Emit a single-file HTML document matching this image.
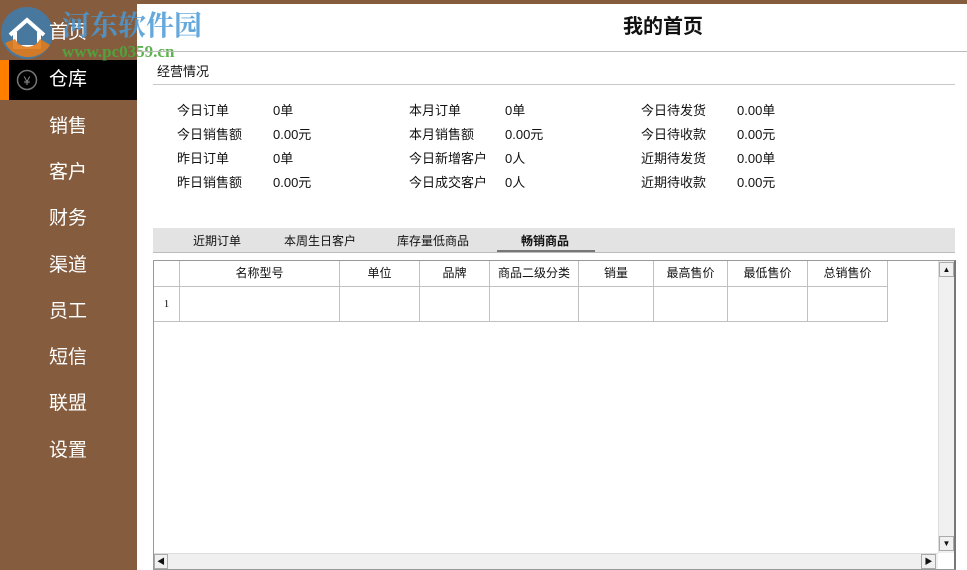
<!DOCTYPE html>
<html><head><meta charset="utf-8"><style>
*{margin:0;padding:0;box-sizing:border-box}
body{width:967px;height:570px;overflow:hidden;background:#fff;font-family:"Liberation Sans","Noto Sans CJK SC",sans-serif;position:relative;font-size:13px;color:#111}
.side{position:absolute;left:0;top:0;width:137px;height:570px;background:#855c3e}
.top{position:absolute;left:137px;top:0;width:830px;height:4px;background:#855c3e}
.it{position:absolute;left:49px;color:#fff;font-size:19px;line-height:22px}
.sel{position:absolute;left:0;top:60px;width:137px;height:40px;background:#000}
.sel i{position:absolute;left:0;top:0;width:9px;height:40px;background:#ff8000}
.a{position:absolute;font-size:13px;line-height:16px;white-space:nowrap}
.hl{position:absolute;height:1px;background:#c8c8c8}
.grid{position:absolute;left:153px;top:260px;width:803px;height:310px;border:1px solid #999;border-right:2px solid #777}
.c{position:absolute;border-right:1px solid #c0c0c0;border-bottom:1px solid #c0c0c0;text-align:center;font-size:12px;line-height:25px}
</style></head><body>
<div class="side"></div><div class="top"></div>
<div class="sel"><i></i></div>
<svg style="position:absolute;left:0;top:5px" width="60" height="60"><circle cx="27" cy="28" r="26" fill="#3a7fb8" opacity=".8"/><path d="M10 30 L27 15 L44 30 M15 27 V42 H39 V27" stroke="#fff" stroke-width="4" fill="none"/><path d="M5 38 A26 26 0 0 0 50 40 L40 34 A14 14 0 0 1 15 34Z" fill="#e07a1a" opacity=".9"/></svg>
<svg style="position:absolute;left:16px;top:69px" width="22" height="22"><circle cx="11" cy="11" r="9.5" stroke="#777" stroke-width="1.5" fill="none"/><text x="11" y="16" font-size="12" fill="#888" text-anchor="middle" font-family="Liberation Sans">¥</text></svg>
<div class="it" style="top:22px">首页</div>
<div class="it" style="top:69px">仓库</div>
<div class="it" style="top:116px">销售</div>
<div class="it" style="top:162px">客户</div>
<div class="it" style="top:208px">财务</div>
<div class="it" style="top:255px">渠道</div>
<div class="it" style="top:301px">员工</div>
<div class="it" style="top:347px">短信</div>
<div class="it" style="top:393px">联盟</div>
<div class="it" style="top:440px">设置</div>
<div class="a" style="left:62px;top:8px;font-size:28px;line-height:32px;font-weight:bold;color:#4a9ad6;font-family:'Noto Serif CJK SC',serif;opacity:.85">河东软件园</div>
<div class="a" style="left:62px;top:44px;font-size:17px;font-weight:bold;color:#4caa3c;font-family:'Liberation Serif',serif;opacity:.9">www.pc0359.cn</div>
<div class="a" style="left:623px;top:15px;font-size:20px;line-height:24px;font-weight:bold">我的首页</div>
<div class="hl" style="left:137px;top:51px;width:830px;background:#bbb"></div>
<div class="a" style="left:157px;top:64px">经营情况</div>
<div class="hl" style="left:153px;top:84px;width:802px"></div>
<div class="a" style="left:177px;top:103px">今日订单</div><div class="a" style="left:273px;top:103px">0单</div>
<div class="a" style="left:177px;top:127px">今日销售额</div><div class="a" style="left:273px;top:127px">0.00元</div>
<div class="a" style="left:177px;top:151px">昨日订单</div><div class="a" style="left:273px;top:151px">0单</div>
<div class="a" style="left:177px;top:175px">昨日销售额</div><div class="a" style="left:273px;top:175px">0.00元</div>
<div class="a" style="left:409px;top:103px">本月订单</div><div class="a" style="left:505px;top:103px">0单</div>
<div class="a" style="left:409px;top:127px">本月销售额</div><div class="a" style="left:505px;top:127px">0.00元</div>
<div class="a" style="left:409px;top:151px">今日新增客户</div><div class="a" style="left:505px;top:151px">0人</div>
<div class="a" style="left:409px;top:175px">今日成交客户</div><div class="a" style="left:505px;top:175px">0人</div>
<div class="a" style="left:641px;top:103px">今日待发货</div><div class="a" style="left:737px;top:103px">0.00单</div>
<div class="a" style="left:641px;top:127px">今日待收款</div><div class="a" style="left:737px;top:127px">0.00元</div>
<div class="a" style="left:641px;top:151px">近期待发货</div><div class="a" style="left:737px;top:151px">0.00单</div>
<div class="a" style="left:641px;top:175px">近期待收款</div><div class="a" style="left:737px;top:175px">0.00元</div>
<div style="position:absolute;left:153px;top:228px;width:802px;height:25px;background:#e3e3e3;border-bottom:1px solid #bbb"></div>
<div class="a" style="left:193px;top:233px;font-size:12px">近期订单</div>
<div class="a" style="left:284px;top:233px;font-size:12px">本周生日客户</div>
<div class="a" style="left:397px;top:233px;font-size:12px">库存量低商品</div>
<div class="a" style="left:521px;top:233px;font-size:12px;font-weight:bold">畅销商品</div>
<div style="position:absolute;left:497px;top:250px;width:98px;height:2px;background:#777"></div>
<div class="grid">
<div class="c" style="left:0;top:0;width:26px;height:26px"></div>
<div class="c" style="left:26px;top:0;width:160px;height:26px">名称型号</div>
<div class="c" style="left:186px;top:0;width:80px;height:26px">单位</div>
<div class="c" style="left:266px;top:0;width:70px;height:26px">品牌</div>
<div class="c" style="left:336px;top:0;width:89px;height:26px">商品二级分类</div>
<div class="c" style="left:425px;top:0;width:75px;height:26px">销量</div>
<div class="c" style="left:500px;top:0;width:74px;height:26px">最高售价</div>
<div class="c" style="left:574px;top:0;width:80px;height:26px">最低售价</div>
<div class="c" style="left:654px;top:0;width:80px;height:26px">总销售价</div>
<div class="c" style="left:0;top:26px;width:26px;height:35px;line-height:34px;font-family:'Liberation Serif',serif;font-size:11px">1</div>
<div class="c" style="left:26px;top:26px;width:160px;height:35px"></div>
<div class="c" style="left:186px;top:26px;width:80px;height:35px"></div>
<div class="c" style="left:266px;top:26px;width:70px;height:35px"></div>
<div class="c" style="left:336px;top:26px;width:89px;height:35px"></div>
<div class="c" style="left:425px;top:26px;width:75px;height:35px"></div>
<div class="c" style="left:500px;top:26px;width:74px;height:35px"></div>
<div class="c" style="left:574px;top:26px;width:80px;height:35px"></div>
<div class="c" style="left:654px;top:26px;width:80px;height:35px"></div>
<div style="position:absolute;left:784px;top:0;width:16px;height:292px;background:#f0f0f0;border-left:1px solid #ddd"></div>
<div style="position:absolute;left:785px;top:1px;width:15px;height:15px;background:#f0f0f0;border:1px solid #aaa;font-size:8px;text-align:center;line-height:14px">▲</div>
<div style="position:absolute;left:785px;top:275px;width:15px;height:15px;background:#f0f0f0;border:1px solid #aaa;font-size:8px;text-align:center;line-height:14px">▼</div>
<div style="position:absolute;left:0;top:292px;width:784px;height:16px;background:#f0f0f0;border-top:1px solid #ddd"></div>
<div style="position:absolute;left:0;top:293px;width:14px;height:15px;border:1px solid #aaa;font-size:8px;text-align:center;line-height:14px">◀</div>
<div style="position:absolute;left:767px;top:293px;width:15px;height:15px;border:1px solid #aaa;font-size:8px;text-align:center;line-height:14px">▶</div>
</div>
</body></html>
